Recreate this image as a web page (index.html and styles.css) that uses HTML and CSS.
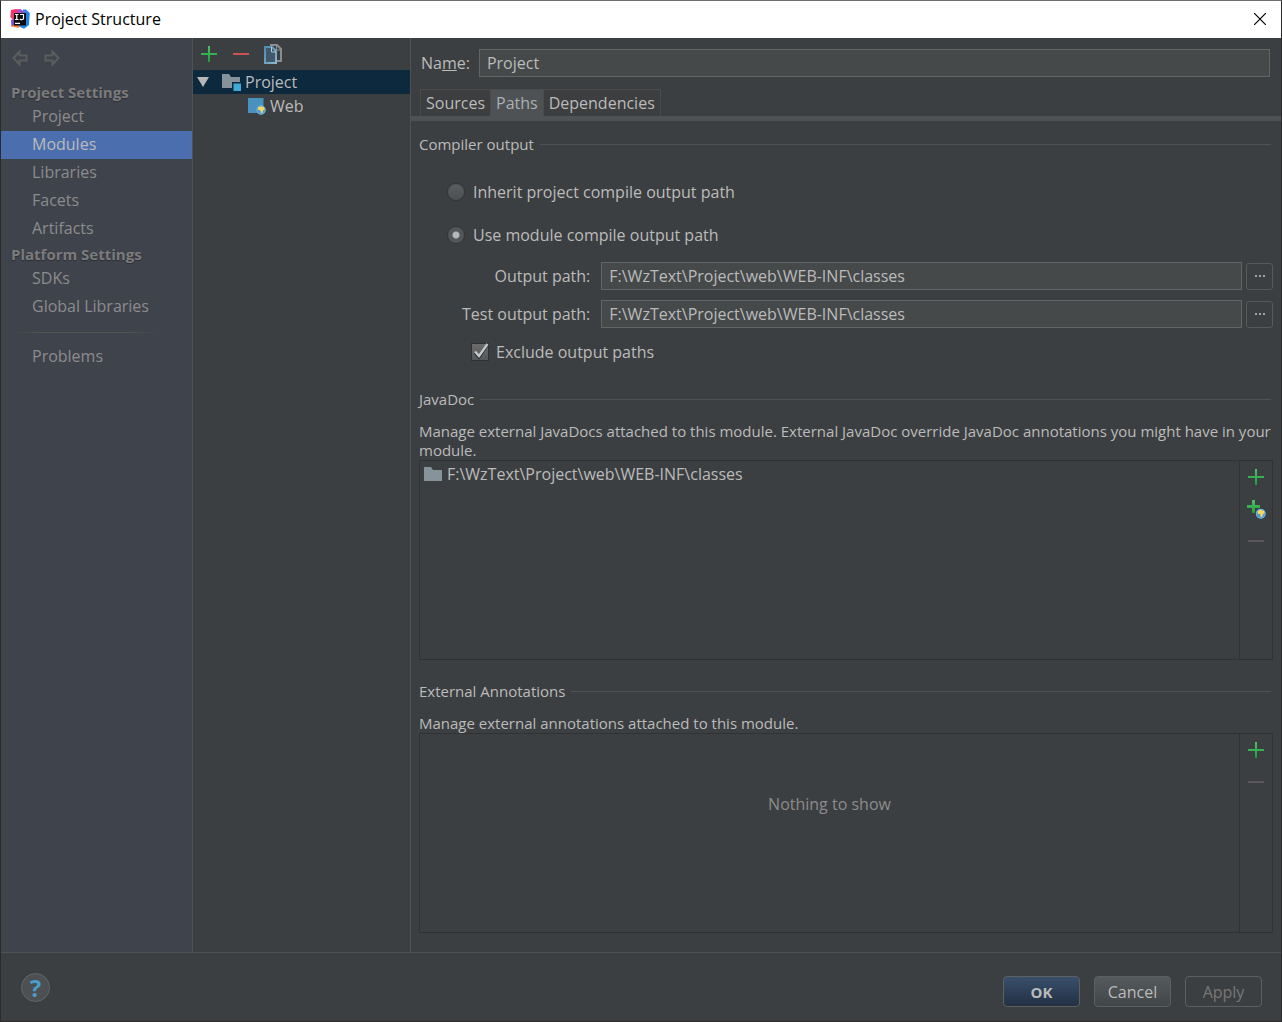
FILE: index.html
```html
<!DOCTYPE html>
<html lang="en">
<head>
<meta charset="utf-8">
<title>Project Structure</title>
<link rel="stylesheet" href="styles.css">
</head>
<body>
<svg width="0" height="0" class="defs" aria-hidden="true">
  <defs>
    <linearGradient id="green" x1="0" y1="0" x2="0" y2="1"><stop offset="0" stop-color="#4fc069"/><stop offset="1" stop-color="#1f9e3d"/></linearGradient>
    <linearGradient id="ijblue" x1="0" y1="0" x2="1" y2="1"><stop offset="0" stop-color="#3b7fe0"/><stop offset="1" stop-color="#1689e8"/></linearGradient>
    <linearGradient id="ijred" x1="0" y1="0" x2="0" y2="1"><stop offset="0" stop-color="#fe2d6e"/><stop offset=".6" stop-color="#e0496b"/><stop offset="1" stop-color="#f98a1c"/></linearGradient>
    <linearGradient id="page" x1="0" y1="0" x2="1" y2="1"><stop offset="0" stop-color="#4e8cb2"/><stop offset="1" stop-color="#8ab5cf"/></linearGradient>
    <symbol id="plus" viewBox="0 0 16 16"><path d="M7 0h2v7h7v2H9v7H7V9H0V7h7z" fill="url(#green)"/></symbol>
    <symbol id="minus" viewBox="0 0 16 16"><path d="M0 7h16v2H0z" fill="currentColor"/></symbol>
    <symbol id="globe" viewBox="0 0 10 10"><circle cx="5" cy="5" r="4.7" fill="#4a96cf"/><circle cx="5" cy="5" r="4.2" fill="none" stroke="#8cc0e4" stroke-width=".7"/><path d="M2 2.6 4.2 1.2 8 2.2 8.6 4.4 7 5.6 6.4 8 4.8 7.8 4.6 5.4 2.2 5z" fill="#f6d662"/></symbol>
    <symbol id="folder" viewBox="0 0 18 14"><path d="M0 0h7l2 3h9v11H0z" fill="#87939a"/></symbol>
  </defs>
</svg>
<div class="window">
  <header class="titlebar">
    <svg class="logo" viewBox="0 0 20 20" aria-hidden="true">
      <path d="M13 .5 16 .5 19.800 4 19 16 14 19.800 8 17z" fill="url(#ijblue)"/>
      <path d="M1 1 6 0 12 1 10 9 9 19 1.500 17.500 3 11 .3 8z" fill="url(#ijred)"/>
      <path d="M7 1 10 0 15 3 9 6z" fill="#9b4fd0"/>
      <path d="M1 11 4 10 5 15 1.500 17.500z" fill="#8a4bc8"/>
      <path d="M4 4h12v12.500H4z" fill="#0b0b12"/>
      <path d="M5 5.500h3.500M6.750 5.500v5M5 10.500h3.500M10 5.500h3.500v4q0 1.200-1.700 1.200-1.200 0-1.900-.7M5 14.300h5" fill="none" stroke="#fff" stroke-width="1.200"/>
    </svg>
    <h1 class="title">Project Structure</h1>
    <button class="close" type="button" aria-label="Close"><svg width="12" height="12" viewBox="0 0 12 12"><path d="M0 0 12 12M12 0 0 12" stroke="#000" stroke-width="1.200"/></svg></button>
  </header>

  <div class="content">
    <nav class="sidebar">
      <div class="history">
        <button type="button" class="plain" aria-label="Back"><svg width="16" height="16" viewBox="0 0 16 16"><path d="M7.500 1.500 1.500 8l6 6.500V10.500h7v-5h-7z" fill="none" stroke="#5c5d5e" stroke-width="2"/></svg></button>
        <button type="button" class="plain" aria-label="Forward"><svg width="16" height="16" viewBox="0 0 16 16"><path d="M8.500 1.500 14.500 8l-6 6.500V10.500h-7v-5h7z" fill="none" stroke="#5c5d5e" stroke-width="2"/></svg></button>
      </div>
      <h2 class="group">Project Settings</h2>
      <a class="nav" href="#project">Project</a>
      <a class="nav selected" href="#modules">Modules</a>
      <a class="nav" href="#libraries">Libraries</a>
      <a class="nav" href="#facets">Facets</a>
      <a class="nav" href="#artifacts">Artifacts</a>
      <h2 class="group">Platform Settings</h2>
      <a class="nav" href="#sdks">SDKs</a>
      <a class="nav" href="#global">Global Libraries</a>
      <hr class="divider">
      <a class="nav" href="#problems">Problems</a>
    </nav>

    <section class="tree">
      <div class="tools">
        <button type="button" class="plain" aria-label="Add"><svg width="16" height="16"><use href="#plus"/></svg></button>
        <button type="button" class="plain red" aria-label="Remove"><svg width="16" height="16"><use href="#minus"/></svg></button>
        <button type="button" class="plain" aria-label="Copy"><svg width="18" height="20" viewBox="0 0 18 20"><path d="M6 1h7l4 4v12h-4" fill="none" stroke="#8b8d8e" stroke-width="2"/><path d="M12.500 1v5H17" fill="none" stroke="#8b8d8e"/><path d="M1 3h7l4 4v12H1z" fill="#41586a" stroke="url(#page)" stroke-width="2"/><path d="M7.500 3v5H12" fill="none" stroke="#b4ccd9"/></svg></button>
      </div>
      <div class="node active">
        <svg width="12" height="10" viewBox="0 0 12 10"><path d="M0 0h12L6 10z" fill="#b5b7b8"/></svg>
        <svg class="module" width="19" height="18" viewBox="0 0 19 18"><path d="M0 1h7l2 3h9v5h-8v6H0z" fill="#87939a"/><path d="M11.500 10.500h7.500V18h-7.500z" fill="#3fabd6"/></svg>
        <span>Project</span>
      </div>
      <div class="node child">
        <svg width="18" height="18" viewBox="0 0 18 18"><path d="M0 1h15.500v15H0z" fill="#4a92be"/><use href="#globe" x="8" y="8" width="10" height="10"/></svg>
        <span>Web</span>
      </div>
    </section>

    <main class="editor">
      <div class="name-row">
        <label for="name">Na<u>m</u>e:</label>
        <input class="field" id="name" type="text" value="Project">
      </div>
      <div class="tabs" role="tablist">
        <button type="button" class="tab" role="tab">Sources</button>
        <button type="button" class="tab current" role="tab" aria-selected="true">Paths</button>
        <button type="button" class="tab" role="tab">Dependencies</button>
      </div>
      <div class="panel">
        <h3 class="heading">Compiler output</h3>
        <label class="option inherit"><input class="radio" type="radio" name="output">Inherit project compile output path</label>
        <label class="option own"><input class="radio" type="radio" name="output" checked>Use module compile output path</label>
        <div class="paths">
          <label for="out">Output path:</label>
          <input class="field" id="out" type="text" value="F:\WzText\Project\web\WEB-INF\classes">
          <button type="button" class="browse" aria-label="Browse"><svg width="10" height="2" viewBox="0 0 10 2"><path d="M0 0h2v2H0zM4 0h2v2H4zM8 0h2v2H8z" fill="#a0a2a3"/></svg></button>
          <label for="test">Test output path:</label>
          <input class="field" id="test" type="text" value="F:\WzText\Project\web\WEB-INF\classes">
          <button type="button" class="browse" aria-label="Browse"><svg width="10" height="2" viewBox="0 0 10 2"><path d="M0 0h2v2H0zM4 0h2v2H4zM8 0h2v2H8z" fill="#a0a2a3"/></svg></button>
        </div>
        <label class="option exclude"><span class="check"><input type="checkbox" checked><svg width="18" height="18" viewBox="0 0 18 18"><path d="M4 9.500 8 14 16.500 1.500" fill="none" stroke="#25282a" stroke-width="3"/><path d="M4 8.500 8 13 16.500 1" fill="none" stroke="#c5c7c8" stroke-width="2.400"/></svg></span>Exclude output paths</label>

        <h3 class="heading doc-heading">JavaDoc</h3>
        <p class="note">Manage external JavaDocs attached to this module. External JavaDoc override JavaDoc annotations you might have in your module.</p>
        <div class="list">
          <div class="items">
            <div class="item"><svg width="18" height="14"><use href="#folder"/></svg>F:\WzText\Project\web\WEB-INF\classes</div>
          </div>
          <div class="actions">
            <button type="button" class="plain" aria-label="Add"><svg width="16" height="16"><use href="#plus"/></svg></button>
            <button type="button" class="plain" aria-label="Add URL"><svg width="19" height="20" viewBox="0 0 19 20"><path d="M5 1h3v5h5v3H8v5H5V9H0V6h5z" fill="url(#green)"/><use href="#globe" x="8.500" y="9.500" width="10.500" height="10.500"/></svg></button>
            <button type="button" class="plain off" aria-label="Remove" disabled><svg width="16" height="16"><use href="#minus"/></svg></button>
          </div>
        </div>

        <h3 class="heading note-heading">External Annotations</h3>
        <p class="note">Manage external annotations attached to this module.</p>
        <div class="list">
          <div class="items"><p class="empty">Nothing to show</p></div>
          <div class="actions">
            <button type="button" class="plain" aria-label="Add"><svg width="16" height="16"><use href="#plus"/></svg></button>
            <button type="button" class="plain off" aria-label="Remove" disabled><svg width="16" height="16"><use href="#minus"/></svg></button>
          </div>
        </div>
      </div>
    </main>
  </div>

  <footer class="footer">
    <button type="button" class="help" aria-label="Help">?</button>
    <div class="buttons">
      <button type="button" class="button primary">OK</button>
      <button type="button" class="button">Cancel</button>
      <button type="button" class="button disabled" disabled>Apply</button>
    </div>
  </footer>
</div>
</body>
</html>
```
FILE: styles.css
```css
* { box-sizing: border-box; }

body {
  margin: 0;
  background: #3c3f41;
  color: #bbbbbb;
  font: 16px/20px "Open Sans", "Noto Sans", sans-serif;
}

h1, h2, h3, p { margin: 0; font-size: inherit; font-weight: normal; }
button, input { font: inherit; color: inherit; margin: 0; }
svg { display: block; flex: none; }
.defs { position: absolute; }

.window {
  display: flex;
  flex-direction: column;
  min-height: 100vh;
  border: 1px solid #2b2b2b;
  border-top-color: #6e6e6e;
}

.plain {
  display: flex;
  align-items: center;
  justify-content: center;
  padding: 0;
  border: 0;
  background: none;
}
.red { color: #c75450; }
.off { color: #5a5858; }

/* Title bar */
.titlebar {
  display: flex;
  align-items: center;
  height: 37px;
  padding: 0 15px 2px 9px;
  background: #fff;
  color: #000;
}
.logo { width: 20px; height: 20px; }
.title { flex: 1; margin-left: 5px; }
.close { padding: 0; border: 0; background: none; }

.content { display: flex; flex: 1; }

/* Sidebar */
.sidebar {
  width: 192px;
  border-right: 1px solid #515151;
  background: #3f434c;
}
.history {
  display: flex;
  gap: 16px;
  height: 43px;
  padding: 12px 11px;
  align-items: flex-start;
}
.group {
  padding-left: 10px;
  color: #7b7b7b;
  font-size: 15px;
  font-weight: bold;
  line-height: 22px;
  text-shadow: 0 1px 1px #2c2f34;
}
.nav {
  display: block;
  padding: 0 0 2px 31px;
  color: #8c8c8c;
  line-height: 26px;
  text-decoration: none;
}
.selected { background: #4b6eaf; color: #bbbbbb; }
.divider {
  height: 1px;
  margin: 11px 32px 10px 10px;
  border: 0;
  background: linear-gradient(90deg, #3f434c, #515151 20%, #515151 80%, #3f434c);
}

/* Module tree */
.tree { width: 218px; border-right: 1px solid #515151; }
.tools {
  display: flex;
  align-items: center;
  gap: 16px;
  height: 32px;
  padding: 0 8px;
}
.tools .plain { width: 16px; }
.node {
  display: flex;
  align-items: center;
  height: 24px;
  padding-left: 4px;
}
.active { background: #0d293e; }
.module { margin: 0 4px 0 13px; }
.child { gap: 4px; padding-left: 55px; }

/* Editor */
.editor {
  display: flex;
  flex: 1;
  flex-direction: column;
  min-width: 0;
  padding-top: 11px;
}
.name-row {
  display: flex;
  align-items: center;
  gap: 9px;
  padding: 0 11px 0 10px;
}
.field {
  width: 100%;
  min-width: 0;
  height: 28px;
  padding: 0 7px;
  border: 1px solid #646464;
  background: #45494a;
}
.tabs {
  display: flex;
  height: 32px;
  margin-top: 12px;
  padding-left: 9px;
  border-bottom: 5px solid #4e5254;
}
.tab {
  padding: 0 5px;
  border: 1px solid #4b4b4b;
  border-width: 1px 1px 0 0;
  background: #3c3e3f;
}
.tab:first-child { border-left-width: 1px; }
.current { background: #4e5254; color: #a9b0b3; }

.panel {
  display: flex;
  flex: 1;
  flex-direction: column;
  padding: 13px 8px 19px;
}
.heading {
  display: flex;
  align-items: center;
  gap: 6px;
  font-size: 15px;
}
.heading::after {
  content: "";
  flex: 1;
  height: 1px;
  margin-right: 2px;
  background: #515151;
}
.option { display: flex; align-items: center; gap: 8px; }
.inherit { margin: 28px 0 23px 28px; }
.own { margin-left: 28px; }
.radio {
  appearance: none;
  width: 18px;
  height: 18px;
  border: 1px solid #333638;
  border-radius: 50%;
  background: linear-gradient(#5a5e60, #4c5052);
}
.radio:checked { background: radial-gradient(circle, #b5b7b8 3px, #53575a 4px); }

.paths {
  display: grid;
  grid-template-columns: max-content 1fr 31px;
  align-items: center;
  row-gap: 10px;
  margin: 17px 0 14px 43px;
}
.paths label { margin-right: 11px; text-align: right; }
.browse {
  display: flex;
  align-items: center;
  justify-content: center;
  height: 27px;
  margin-left: 4px;
  padding: 0;
  border: 1px solid #57595a;
  border-radius: 3px;
  background: none;
}
.exclude { margin-left: 52px; gap: 7px; }
.check { display: grid; width: 18px; height: 18px; }
.check > * { grid-area: 1 / 1; }
.check input {
  appearance: none;
  border: 1px solid #2f3234;
  background: linear-gradient(#6b6b6b, #555759);
}

.doc-heading { margin: 27px 0 13px; }
.note-heading { margin: 21px 0 13px; }
.note { font-size: 15px; line-height: 19px; }

.list {
  display: flex;
  flex: 1 0 200px;
  border: 1px solid #323232;
}
.items { flex: 1; }
.item { display: flex; gap: 5px; align-items: center; padding: 3px 4px; }
.empty { padding-top: 60px; color: #8c8c8c; text-align: center; }
.actions {
  display: flex;
  flex-direction: column;
  width: 33px;
  border-left: 1px solid #323232;
}
.actions .plain { height: 32px; }

/* Footer */
.footer {
  display: flex;
  justify-content: space-between;
  height: 69px;
  padding: 20px 19px 0 20px;
  border-top: 1px solid #515151;
}
.help {
  width: 29px;
  height: 29px;
  padding: 0;
  border: 1px solid #626668;
  border-radius: 50%;
  background: #4c5052;
  color: #4a9cc9;
  font-size: 24px;
  font-weight: bold;
  line-height: 24px;
}
.buttons { display: flex; gap: 14px; padding-top: 3px; }
.button {
  width: 77px;
  height: 31px;
  padding: 0;
  border: 1px solid #5e6060;
  border-radius: 4px;
  background: linear-gradient(#555a5c, #414648);
}
.primary { background: linear-gradient(#384f6b, #233143); font-size: 15px; font-weight: bold; }
.disabled { background: none; color: #777777; }
```
